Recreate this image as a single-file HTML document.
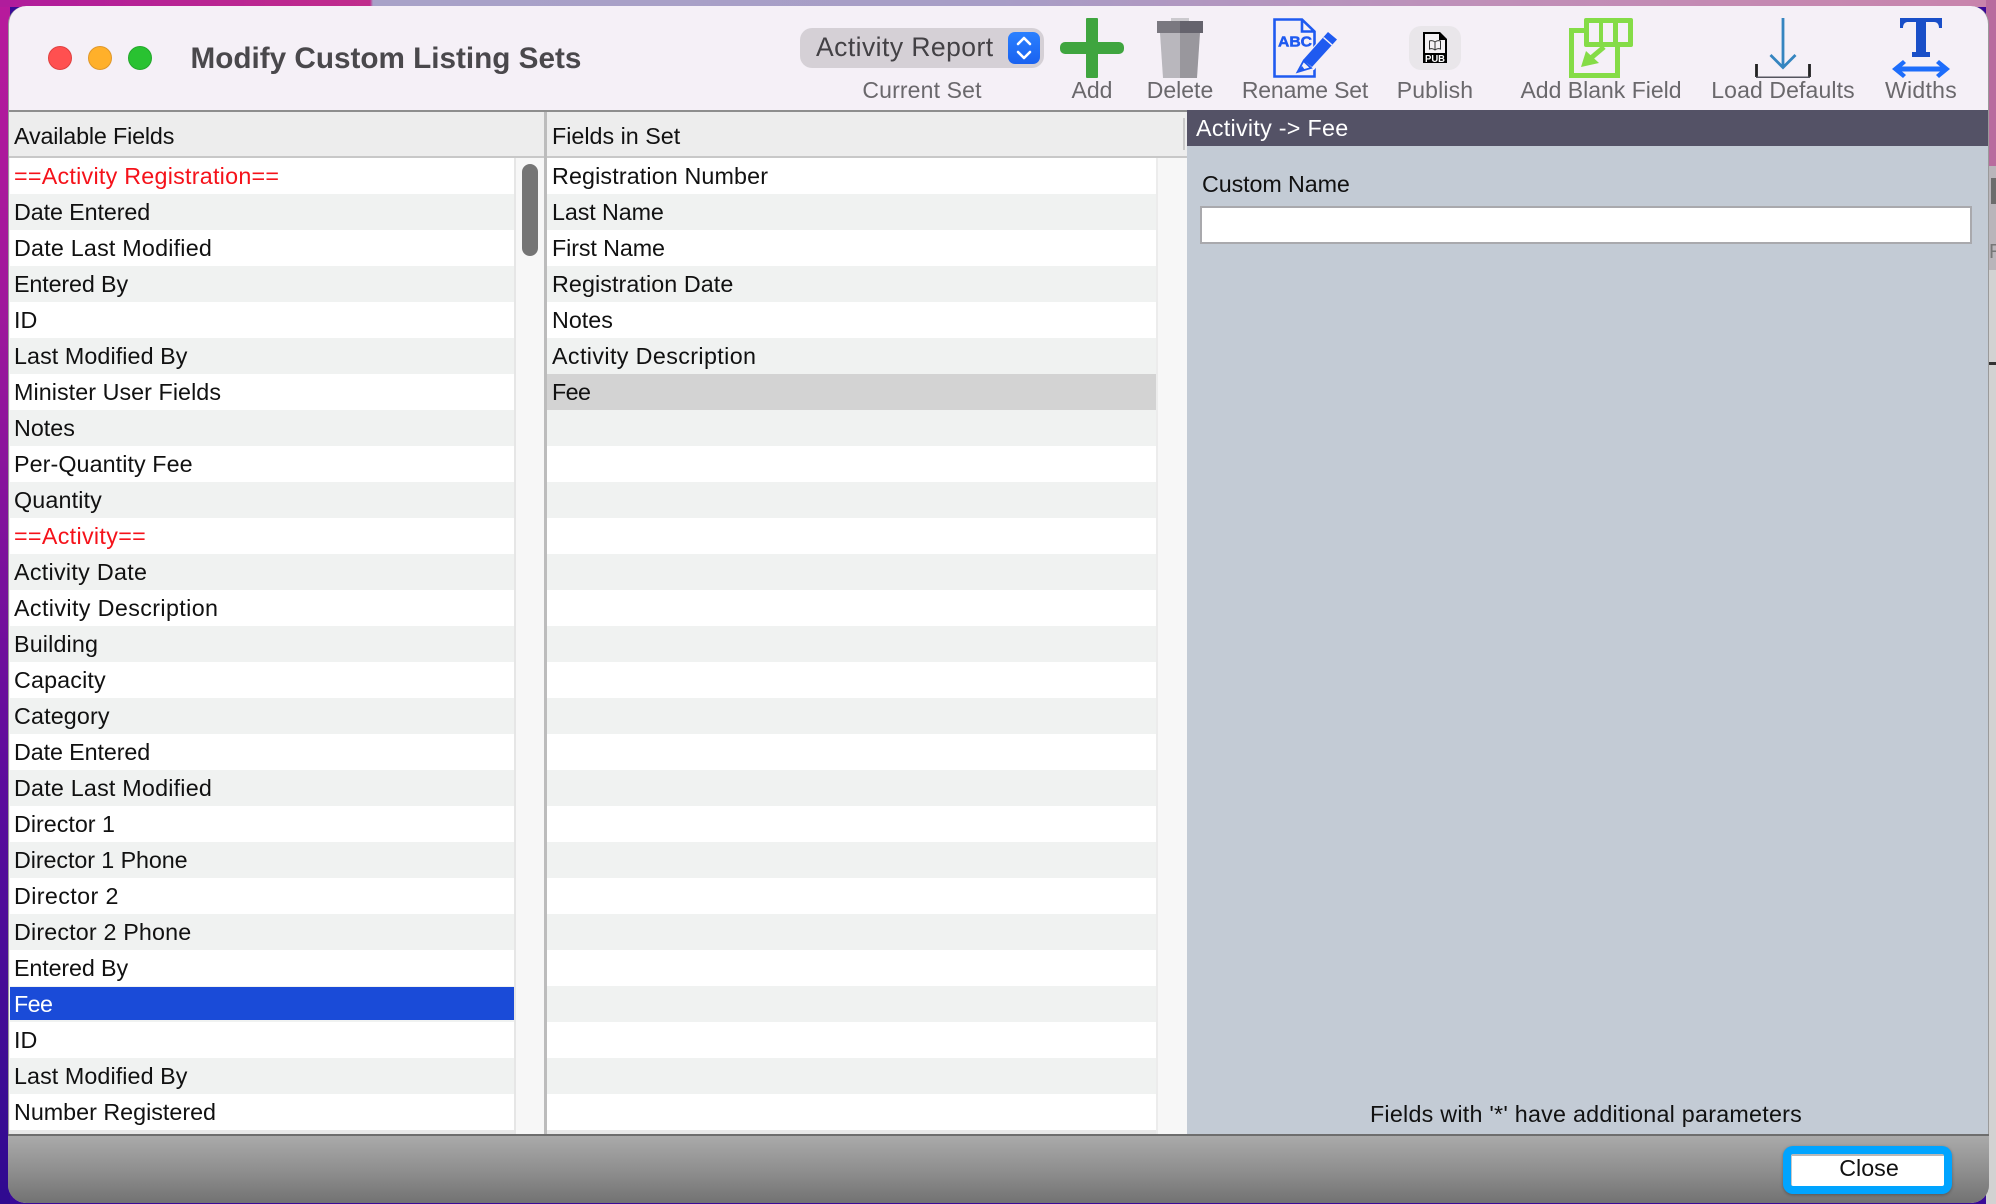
<!DOCTYPE html>
<html>
<head>
<meta charset="utf-8">
<title>Modify Custom Listing Sets</title>
<style>
html,body{margin:0;padding:0;width:1996px;height:1204px;overflow:hidden;background:#3a0a98}
*{box-sizing:border-box}
body{position:relative;font-family:"Liberation Sans",Arial,sans-serif;font-size:23.3px;color:#111}
.a{position:absolute}
.t{position:absolute;white-space:nowrap;line-height:28px}
.c{transform:translateX(-50%)}
.lb{color:#6a686c;font-size:23px;top:76px}
.list{position:absolute;top:158px}
.list div{height:36px;line-height:36px;padding-left:4px;white-space:nowrap;background:#fff}
.list div:nth-child(even){background:#f0f2f1}
.list .r{color:#f5121a}
</style>
</head>
<body>
<!-- desktop background -->
<div class="a" style="left:0;top:0;width:10px;height:1204px;background:linear-gradient(180deg,#b81a9c 0,#a0189c 300px,#5a0a9c 800px,#2f0a90 1204px)"></div>
<div class="a" style="left:0;top:0;width:1996px;height:7px;background:linear-gradient(90deg,#b01c9c 0,#c02c8c 370px,#a8a2c8 373px,#a79dc6 1000px,#c08fb8 1500px,#c884ac 1996px)"></div>
<div class="a" style="left:1986px;top:0;width:10px;height:166px;background:#b86c9e"></div>
<div class="a" style="left:1986px;top:166px;width:10px;height:104px;background:#b9b5ba"></div>
<div class="a" style="left:1986px;top:270px;width:10px;height:934px;background:#d2d2d2"></div>
<div class="a" style="left:1991px;top:178px;width:5px;height:26px;background:#6c6c6c"></div>
<div class="a" style="left:1988px;top:362px;width:8px;height:3px;background:#333"></div>
<div class="t" style="left:1989px;top:238px;color:#777;font-size:20px;width:7px;overflow:hidden">R</div>

<!-- window -->
<div class="a" style="left:8px;top:6px;width:1981px;height:1197px;border-radius:18px;overflow:hidden;background:#f5f0f7;border-left:1px solid #9a9a9a;border-right:1px solid #9a9a9a"></div>
<div class="a" style="left:9px;top:110px;width:1979px;height:2px;background:#8e8e8e"></div>

<!-- traffic lights -->
<div class="a" style="left:48px;top:46px;width:24px;height:24px;border-radius:50%;background:#ff5050;border:1px solid #e04040"></div>
<div class="a" style="left:88px;top:46px;width:24px;height:24px;border-radius:50%;background:#ffb02a;border:1px solid #e0982a"></div>
<div class="a" style="left:128px;top:46px;width:24px;height:24px;border-radius:50%;background:#29c231;border:1px solid #24a82c"></div>
<div class="t" style="left:190.500px;top:45px;font-size:29.7px;font-weight:bold;color:#4a484c">Modify Custom Listing Sets</div>

<!-- popup -->
<div class="a" style="left:800px;top:28px;width:244px;height:40px;border-radius:12px;background:#d5d0d6"></div>
<div class="t" style="left:816px;top:32px;font-size:26.5px;color:#434145;line-height:30px;letter-spacing:.45px">Activity Report</div>
<div class="a" style="left:1008px;top:32px;width:32px;height:32px;border-radius:7px;background:linear-gradient(180deg,#2a80ff,#1a62f0)"></div>

<!-- toolbar labels -->
<div class="t c lb" style="left:922px;letter-spacing:.15px">Current Set</div>
<div class="t c lb" style="left:1092px">Add</div>
<div class="t c lb" style="left:1180px">Delete</div>
<div class="t c lb" style="left:1305px;letter-spacing:-.15px">Rename Set</div>
<div class="t c lb" style="left:1435px;letter-spacing:.15px">Publish</div>
<div class="t c lb" style="left:1601px">Add Blank Field</div>
<div class="t c lb" style="left:1783px;letter-spacing:.12px">Load Defaults</div>
<div class="t c lb" style="left:1921px;letter-spacing:.3px">Widths</div>

<!-- Column headers -->
<div class="a" style="left:9px;top:112px;width:1179px;height:44px;background:#ededed"></div>
<div class="a" style="left:9px;top:156px;width:1179px;height:2px;background:#c8c8c8"></div>
<div class="t" style="left:14px;top:122px;letter-spacing:-.16px">Available Fields</div>
<div class="t" style="left:552px;top:122px">Fields in Set</div>
<div class="a" style="left:1183px;top:118px;width:2px;height:32px;background:#c9c9c9"></div>

<!-- Available list -->
<div class="list" style="left:10px;width:504px;height:972px;overflow:hidden">
<div class="r" style="letter-spacing:.25px">==Activity Registration==</div>
<div style="letter-spacing:-.1px">Date Entered</div>
<div style="letter-spacing:.21px">Date Last Modified</div>
<div style="letter-spacing:-.13px">Entered By</div>
<div>ID</div>
<div style="letter-spacing:.08px">Last Modified By</div>
<div style="letter-spacing:.06px">Minister User Fields</div>
<div>Notes</div>
<div style="letter-spacing:.08px">Per-Quantity Fee</div>
<div style="letter-spacing:.15px">Quantity</div>
<div class="r" style="letter-spacing:.32px">==Activity==</div>
<div style="letter-spacing:.29px">Activity Date</div>
<div style="letter-spacing:.38px">Activity Description</div>
<div style="letter-spacing:.15px">Building</div>
<div style="letter-spacing:.15px">Capacity</div>
<div style="letter-spacing:.15px">Category</div>
<div style="letter-spacing:-.1px">Date Entered</div>
<div style="letter-spacing:.21px">Date Last Modified</div>
<div>Director 1</div>
<div style="letter-spacing:-.08px">Director 1 Phone</div>
<div style="letter-spacing:.38px">Director 2</div>
<div style="letter-spacing:.16px">Director 2 Phone</div>
<div style="letter-spacing:-.13px">Entered By</div>
<div>Fee</div>
<div>ID</div>
<div style="letter-spacing:.08px">Last Modified By</div>
<div>Number Registered</div>
</div>
<div class="a" style="left:10px;top:987px;width:504px;height:33px;background:#1a4bd8"></div>
<div class="t" style="left:14px;top:990px;color:#fff;letter-spacing:-.6px">Fee</div>
<div class="a" style="left:9px;top:1130px;width:1179px;height:4px;background:#e8e8e8"></div>

<!-- scroll track 1 -->
<div class="a" style="left:514px;top:158px;width:30px;height:976px;background:#f7f7f7;border-left:2px solid #e6e6e6"></div>
<div class="a" style="left:522px;top:164px;width:16px;height:92px;border-radius:8px;background:#757575"></div>
<div class="a" style="left:544px;top:112px;width:3px;height:1022px;background:#bcbcbc"></div>

<!-- Fields in set list -->
<div class="list" style="left:547px;width:610px;height:972px;overflow:hidden">
<div style="padding-left:5px;letter-spacing:.13px">Registration Number</div>
<div style="padding-left:5px;letter-spacing:-.1px">Last Name</div>
<div style="padding-left:5px;letter-spacing:-.1px">First Name</div>
<div style="padding-left:5px;letter-spacing:.08px">Registration Date</div>
<div style="padding-left:5px">Notes</div>
<div style="padding-left:5px;letter-spacing:.38px">Activity Description</div>
<div style="padding-left:5px;background:#d3d3d3;letter-spacing:-.6px">Fee</div>
<div></div><div></div><div></div><div></div><div></div><div></div><div></div><div></div><div></div><div></div><div></div><div></div><div></div><div></div><div></div><div></div><div></div><div></div><div></div><div></div>
</div>
<div class="a" style="left:547px;top:1130px;width:641px;height:4px;background:#e8e8e8"></div>
<div class="a" style="left:1156px;top:158px;width:31px;height:976px;background:#f7f7f7;border-left:2px solid #ececec"></div>

<!-- right panel -->
<div class="a" style="left:1187px;top:110px;width:801px;height:36px;background:#545266"></div>
<div class="a" style="left:1187px;top:146px;width:801px;height:988px;background:#c3cbd5"></div>
<div class="t" style="left:1196px;top:114px;color:#fff;letter-spacing:.28px">Activity -&gt; Fee</div>
<div class="t" style="left:1202px;top:170px;letter-spacing:-.1px">Custom Name</div>
<div class="a" style="left:1200px;top:206px;width:772px;height:38px;background:#fff;border:2px solid #a9a9ad"></div>
<div class="t c" style="left:1586px;top:1100px;letter-spacing:.24px">Fields with '*' have additional parameters</div>

<!-- footer -->
<div class="a" style="left:8px;top:1134px;width:1981px;height:69px;border-radius:0 0 18px 18px;background:linear-gradient(180deg,#6e6e6e 0,#6e6e6e 2px,#aaaaaa 2px,#8c8c8c 40px,#727272 100%)"></div>
<div class="a" style="left:1783px;top:1146px;width:169px;height:48px;border-radius:10px;background:#00a4ff;box-shadow:0 1px 3px rgba(0,0,0,.3)"></div>
<div class="a" style="left:1791px;top:1154px;width:153px;height:32px;background:#fff;border-radius:2px;border-top:2px solid #b8b8b8;border-left:1px solid #c8c8c8"></div>
<div class="t c" style="left:1869px;top:1154px;color:#111">Close</div>

<!-- icons -->
<svg class="a" style="left:0;top:0" width="1996" height="1204" viewBox="0 0 1996 1204" fill="none">
  <!-- popup chevrons -->
  <path d="M1018 44l6-6 6 6M1018 52l6 6 6-6" stroke="#fff" stroke-width="2.6" stroke-linecap="round" stroke-linejoin="round"/>
  <!-- add -->
  <rect x="1086" y="18" width="12" height="60" rx="1" fill="#3fa53f"/>
  <rect x="1060" y="42" width="64" height="12" rx="5" fill="#3fa53f"/>
  <!-- delete -->
  <rect x="1171" y="18" width="18" height="4" fill="#cbc9ce"/>
  <path d="M1157 21h23v12h-23z" fill="#7a7880"/>
  <path d="M1180 21h23v12h-23z" fill="#65636d"/>
  <path d="M1160 33h20v45h-17z" fill="#b9b7bd"/>
  <path d="M1180 33h20l-3 45h-17z" fill="#99979d"/>
  <!-- rename -->
  <path d="M1302 19.500H1274.500V76.500H1314.500V31.500L1302 19.500ZM1302 19.500V31.500H1314.500" stroke="#1f5af0" stroke-width="2.600" fill="#f5f0f7"/>
  <text x="1295" y="46.500" font-family="Liberation Sans,sans-serif" font-weight="bold" font-size="15" text-anchor="middle" fill="#1f5af0" stroke="#1f5af0" stroke-width=".5" textLength="34" lengthAdjust="spacingAndGlyphs">ABC</text>
  <path d="M1300 62L1328 30L1339 40L1314 70L1296 73.500Z" fill="#f5f0f7"/>
  <path d="M1303 60L1328 32L1337 39.500L1312 67Z" fill="#1f5af0"/>
  <path d="M1303.500 61L1311 68L1297.500 72Z" stroke="#1f5af0" stroke-width="1.800" fill="#f5f0f7"/>
  <path d="M1298 71.800L1302 66L1305 70Z" fill="#1f5af0"/>
  <path d="M1323.500 37.500L1332 45" stroke="#f5f0f7" stroke-width="1.500"/>
  <!-- publish -->
  <rect x="1409" y="26" width="52" height="44" rx="12" fill="#e9e6ea"/>
  <path d="M1423 32H1440L1447 39V63H1423Z" fill="#000"/>
  <path d="M1425 34H1439V40H1445V53H1425Z" fill="#f5f2f5"/>
  <path d="M1435 42C1433 40.500 1431 40.500 1429.500 41V49C1431 48.500 1433 48.500 1435 50C1437 48.500 1439 48.500 1440.500 49V41C1439 40.500 1437 40.500 1435 42ZM1435 42V50" stroke="#333" stroke-width="1"/>
  <text x="1435" y="62" font-family="Liberation Sans,sans-serif" font-weight="bold" font-size="10.500" text-anchor="middle" fill="#fff" textLength="20" lengthAdjust="spacingAndGlyphs">PUB</text>
  <!-- add blank field -->
  <path d="M1584 30.500H1571.500V75.500H1617.500V47" stroke="#85dc47" stroke-width="5" />
  <rect x="1584" y="18" width="49" height="29" rx="2" fill="#85dc47"/>
  <rect x="1589" y="23" width="10" height="19" fill="#f5f0f7"/>
  <rect x="1603" y="23" width="10" height="19" fill="#f5f0f7"/>
  <rect x="1618" y="23" width="10" height="19" fill="#f5f0f7"/>
  <path d="M1604 47L1591 58" stroke="#85dc47" stroke-width="5"/>
  <path d="M1581 67L1586 51L1599 63Z" fill="#85dc47"/>
  <!-- load defaults -->
  <path d="M1783 18V67M1770.500 55L1783 67.500L1795.500 55" stroke="#3585c0" stroke-width="2.800"/>
  <path d="M1756.500 64V77M1809.500 64V77" stroke="#222" stroke-width="2.800"/>
  <path d="M1756 77.300H1810" stroke="#55555f" stroke-width="1.500"/>
  <!-- widths -->
  <path d="M1900 18H1942V28H1939C1939 24 1937 22 1934 22H1926V52H1930V57H1912V52H1916V22H1908C1905 22 1903 24 1903 28H1900Z" fill="#1a4fc8"/>
  <path d="M1892 69L1903 60L1906 63L1902 66.500H1940L1936 63L1939 60L1950 69L1939 78L1936 75L1940 71.500H1902L1906 75L1903 78Z" fill="#1d6dfb"/>
</svg>
</body>
</html>
